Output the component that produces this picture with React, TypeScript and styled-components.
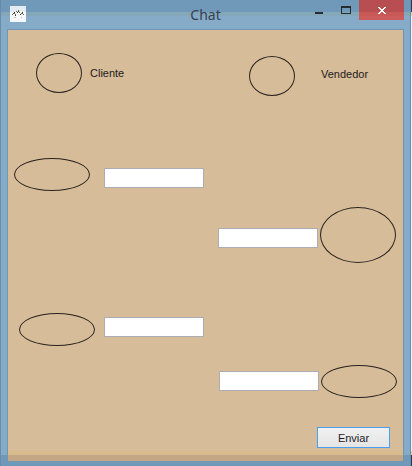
import React from "react";
import styled, { createGlobalStyle } from "styled-components";

const Global = createGlobalStyle`
  *, *::before, *::after { box-sizing: border-box; }
  body {
    margin: 0;
    background: linear-gradient(#24385c 0 12px, #e8d494 12px 16px, #eef0f4 16px calc(100% - 15px), #e8d494 calc(100% - 15px) calc(100% - 11px), #24385c calc(100% - 11px));
    font-family: "Liberation Sans", Arial, sans-serif;
    font-size: 11px;
    color: #1e1a20;
  }
`;

const Window = styled.main`
  display: flex;
  flex-direction: column;
  min-height: 100vh;
  margin-right: 1px;
  padding: 0 6px 4px;
  border: solid #6a8cab;
  border-width: 0 1px;
  background: linear-gradient(#7098b8 0 12px, #84a7ba 12px 16px, #86abc8 16px calc(100% - 11px), #7098b8 calc(100% - 11px));
`;

const TitleBar = styled.header`
  display: grid;
  grid-template-columns: 1fr auto 1fr;
  align-items: start;
  height: 29px;
`;

const AppIcon = styled.svg`
  width: 16px;
  height: 16px;
  margin: 6px 0 0 3px;
`;

const Title = styled.h1`
  margin: 5px 0 0;
  font: 400 14px/20px "Noto Sans", "Open Sans", sans-serif;
  color: #354052;
`;

const Controls = styled.div`
  display: flex;
  justify-content: flex-end;
`;

const Control = styled.button<{ $close?: boolean }>`
  display: flex;
  align-items: center;
  justify-content: center;
  width: ${(p) => (p.$close ? 45 : 27)}px;
  height: 20px;
  padding: 0;
  border: 0;
  background: ${(p) => (p.$close ? "linear-gradient(#b84d52 0 12px, #c95957 12px 16px, #cc5c5c 16px)" : "transparent")};
`;

const Form = styled.form`
  flex: 1;
  display: flex;
  flex-direction: column;
  padding: 23px 6px 13px;
  border: 1px solid #7096b5;
  background: linear-gradient(#d6bc98 0 calc(100% - 10px), #d8bb8c calc(100% - 10px) calc(100% - 6px), #c3a785 calc(100% - 6px));
`;

const People = styled.div`
  display: grid;
  grid-template-columns: 213fr 148fr;
  height: 105px;
  padding-left: 22px;
`;

const Person = styled.div<{ $gap: number; $drop?: number }>`
  display: flex;
  align-items: center;
  gap: ${(p) => p.$gap}px;
  height: 40px;
  margin-top: ${(p) => p.$drop ?? 0}px;
`;

const Name = styled.label<{ $raise?: number }>`
  line-height: 16px;
  padding-bottom: ${(p) => p.$raise ?? 0}px;
`;

const Oval = styled.span<{ $w: number; $h: number }>`
  flex: none;
  width: ${(p) => p.$w}px;
  height: ${(p) => p.$h}px;
  border: 1px solid #2a2420;
  border-radius: 50%;
`;

const Message = styled.div<{ $gap: number; $after: number; $inset?: number; $own?: boolean }>`
  display: flex;
  align-items: center;
  justify-content: ${(p) => (p.$own ? "flex-end" : "flex-start")};
  gap: ${(p) => p.$gap}px;
  margin-bottom: ${(p) => p.$after}px;
  padding: ${(p) => (p.$own ? `0 ${p.$inset ?? 0}px 0 0` : `0 0 0 ${p.$inset ?? 0}px`)};
`;

const Field = styled.input<{ $drop?: number; $raise?: number }>`
  width: 100px;
  height: 20px;
  margin: ${(p) => p.$drop ?? 0}px 0 ${(p) => p.$raise ?? 0}px;
  padding: 1px 3px;
  border: 1px solid #abadb3;
  border-radius: 0;
  background: #fff;
  font: inherit;
`;

const Send = styled.button`
  align-self: flex-end;
  width: 73px;
  height: 21px;
  margin: auto 7px 0 0;
  padding: 0;
  border: 1px solid #4aa0f0;
  background: linear-gradient(#f0f0f0, #e5e5e5);
  color: #1c1c28;
  font: inherit;
`;

export default function App() {
  return (
    <>
      <Global />
      <Window>
        <TitleBar>
          <AppIcon viewBox="0 0 16 16" shapeRendering="crispEdges" aria-hidden="true">
            <path fill="#f6f8fb" d="M0 0h16v16H0z" />
            <path fill="#e4ebf1" d="M0 0h16v6H0z" />
            <path fill="#6d6841" d="M2 8h1v1H2zM3 7h2v1H3zM5 8h1v1H5zM6 5h1v1H6zM8 4h1v1H8zM9 6h1v1H9zM11 7h2v1h-2zM13 8h1v1h-1z" />
            <path fill="#34383a" d="M4 6h1v1H4zM7 6h1v1H7zM8 5h1v1H8zM10 8h1v1h-1zM12 6h1v1h-1zM5 9h1v1H5z" />
            <path fill="#c2c4c0" d="M4 11h2v1H4zM11 11h1v1h-1z" />
          </AppIcon>
          <Title>Chat</Title>
          <Controls>
            <Control type="button" aria-label="Minimizar">
              <svg width="8" height="8" aria-hidden="true"><path fill="#252c30" d="M0 6h8v2H0z" /></svg>
            </Control>
            <Control type="button" aria-label="Maximizar">
              <svg width="10" height="8" aria-hidden="true"><path fill="#252c30" fillRule="evenodd" d="M0 0h10v8H0zM1 2v5h8V2z" /></svg>
            </Control>
            <Control type="button" $close aria-label="Cerrar">
              <svg width="8" height="8" shapeRendering="crispEdges" aria-hidden="true">
                <path fill="#fff" d="M0 1h2v1H0zM6 1h2v1H6zM1 2h2v1H1zM5 2h2v1H5zM2 3h4v1H2zM3 4h2v1H3zM2 5h4v1H2zM1 6h2v1H1zM5 6h2v1H5zM0 7h2v1H0zM6 7h2v1H6z" />
              </svg>
            </Control>
          </Controls>
        </TitleBar>
        <Form onSubmit={(e) => e.preventDefault()}>
          <People>
            <Person $gap={8}>
              <Oval $w={46} $h={40} />
              <Name htmlFor="cliente">Cliente</Name>
            </Person>
            <Person $gap={26} $drop={3}>
              <Oval $w={46} $h={40} />
              <Name htmlFor="vendedor" $raise={4}>Vendedor</Name>
            </Person>
          </People>
          <Message $gap={14} $after={16}>
            <Oval $w={76} $h={33} />
            <Field id="cliente" $drop={6} />
          </Message>
          <Message $own $gap={2} $after={50} $inset={1}>
            <Field id="vendedor" $drop={6} />
            <Oval $w={76} $h={56} />
          </Message>
          <Message $gap={9} $after={19} $inset={5}>
            <Oval $w={76} $h={33} />
            <Field aria-label="Cliente" $raise={6} />
          </Message>
          <Message $own $gap={2} $after={29}>
            <Field aria-label="Vendedor" $raise={2} />
            <Oval $w={76} $h={33} />
          </Message>
          <Send type="submit">Enviar</Send>
        </Form>
      </Window>
    </>
  );
}
